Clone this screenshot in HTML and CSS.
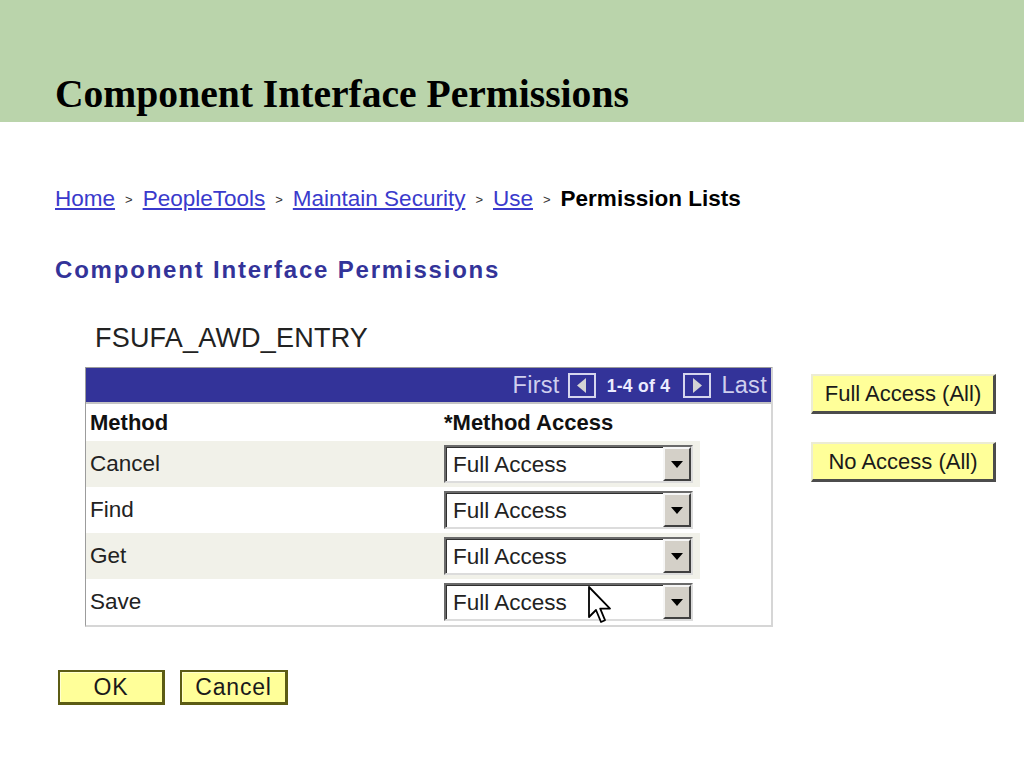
FILE: index.html
```html
<!DOCTYPE html>
<html lang="en">
<head>
    <meta charset="UTF-8">
    <meta name="viewport" content="width=device-width, initial-scale=1.0">
    <title>Component Interface Permissions</title>
    <link rel="stylesheet" href="styles.css">
</head>
<body>
    <header class="slide-header">
        <h1 class="slide-title">Component Interface Permissions</h1>
    </header>

    <main class="page">
        <nav class="crumbs">
            <a href="#">Home</a><span class="crumb-sep">&gt;</span><a href="#">PeopleTools</a><span class="crumb-sep">&gt;</span><a href="#">Maintain Security</a><span class="crumb-sep">&gt;</span><a href="#">Use</a><span class="crumb-sep">&gt;</span><span class="crumb-current">Permission Lists</span>
        </nav>

        <h2 class="page-title">Component Interface Permissions</h2>

        <div class="ci-name">FSUFA_AWD_ENTRY</div>

        <div class="ci-body">
            <div class="grid">
                <div class="grid-bar">
                    <span class="pager-link">First</span>
                    <svg class="pager-btn pager-prev" width="28" height="25" viewBox="0 0 28 25">
                        <rect x="1" y="1" width="26" height="23" fill="#333399" stroke="#d6d6ee" stroke-width="2"/>
                        <polygon points="9,12.5 18,5 18,20" fill="#d4d4d4"/>
                    </svg>
                    <span class="pager-count">1-4 of 4</span>
                    <svg class="pager-btn pager-next" width="28" height="25" viewBox="0 0 28 25">
                        <rect x="1" y="1" width="26" height="23" fill="#333399" stroke="#d6d6ee" stroke-width="2"/>
                        <polygon points="19,12.5 10,5 10,20" fill="#d4d4d4"/>
                    </svg>
                    <span class="pager-link">Last</span>
                </div>

                <table class="grid-table">
                    <thead>
                        <tr>
                            <th class="col-method">Method</th>
                            <th class="col-access">*Method Access</th>
                        </tr>
                    </thead>
                    <tbody>
                        <tr class="row-alt">
                            <td>Cancel</td>
                            <td><div class="dropdown"><span class="dropdown-value">Full Access</span><span class="dropdown-btn"></span></div></td>
                        </tr>
                        <tr>
                            <td>Find</td>
                            <td><div class="dropdown"><span class="dropdown-value">Full Access</span><span class="dropdown-btn"></span></div></td>
                        </tr>
                        <tr class="row-alt">
                            <td>Get</td>
                            <td><div class="dropdown"><span class="dropdown-value">Full Access</span><span class="dropdown-btn"></span></div></td>
                        </tr>
                        <tr>
                            <td>Save</td>
                            <td>
                                <div class="dropdown">
                                    <span class="dropdown-value">Full Access</span><span class="dropdown-btn"></span>
                                    <!-- mouse pointer captured in the screenshot -->
                                    <svg class="mouse-cursor" width="26" height="40" viewBox="0 0 13 20">
                                        <path d="M1 1 L1 16 L4.5 12.5 L7 18.5 L9 17.6 L6.6 11.8 L11.5 11.8 Z" fill="#fff" stroke="#000" stroke-width="0.9" stroke-linejoin="round"/>
                                    </svg>
                                </div>
                            </td>
                        </tr>
                    </tbody>
                </table>
            </div>

            <div class="bulk-actions">
                <button class="raised-btn">Full Access (All)</button>
                <button class="raised-btn">No Access (All)</button>
            </div>
        </div>

        <div class="form-actions">
            <button class="ps-btn ps-btn-ok">OK</button>
            <button class="ps-btn">Cancel</button>
        </div>
    </main>
</body>
</html>
```

FILE: styles.css
```css
:root {
    --band-green: #bad4ab;
    --ps-navy: #333399;
    --ps-link: #3a3acc;
    --ps-yellow: #ffff99;
    --row-alt: #f1f1e9;
    --text-color: #1e1e1e;
}

body {
    margin: 0;
    background: #ffffff;
    color: var(--text-color);
    font-family: 'Liberation Sans', Arial, sans-serif;
}

.slide-header {
    height: 122px;
    box-sizing: border-box;
    padding: 72px 0 0 55px;
    background: var(--band-green);
}

.slide-title {
    margin: 0;
    font-family: 'Liberation Serif', 'Times New Roman', serif;
    font-size: 39.6px;
    line-height: 45px;
    font-weight: bold;
    color: #000;
}

.page {
    padding: 0 0 0 55px;
}

.crumbs {
    margin-top: 63px;
    font-size: 22.5px;
    line-height: 28px;
    white-space: nowrap;
}

.crumbs a {
    color: var(--ps-link);
    text-decoration: underline;
}

.crumb-sep {
    display: inline-block;
    margin: 0 10px;
    font-size: 13px;
    vertical-align: 2px;
    color: #333;
}

.crumb-current {
    font-weight: bold;
    color: #000;
}

.page-title {
    margin: 41px 0 0;
    font-size: 24px;
    line-height: 30px;
    letter-spacing: 1.8px;
    font-weight: bold;
    color: var(--ps-navy);
}

.ci-name {
    margin: 37px 0 0 40px;
    font-size: 27px;
    line-height: 32px;
    letter-spacing: 0.2px;
    color: #222;
}

.ci-body {
    display: flex;
    align-items: flex-start;
    margin: 13px 0 0 30px;
}

.grid {
    width: 688px;
    box-sizing: border-box;
    border: 1px solid #9c9c9c;
    border-right: 2px solid #d6d6d6;
    border-bottom: 2px solid #d6d6d6;
    background: #fff;
}

.grid-bar {
    display: flex;
    align-items: center;
    justify-content: flex-end;
    height: 34px;
    padding-right: 4px;
    background: var(--ps-navy);
    border-bottom: 2px solid #c4c4c4;
    color: #cfcfee;
}

.pager-link {
    font-size: 23.5px;
    letter-spacing: 0.3px;
}

.pager-prev {
    margin: 0 11px 0 8px;
}

.pager-next {
    margin: 0 10px 0 13px;
}

.pager-count {
    margin-top: 2px;
    font-size: 17.5px;
    font-weight: bold;
    letter-spacing: 0.3px;
    color: #ececff;
}

.pager-btn {
    display: block;
}

.grid-table {
    width: 614px;
    border-collapse: collapse;
}

.grid-table th {
    height: 37px;
    padding: 0 0 0 4px;
    text-align: left;
    font-size: 22px;
    font-weight: bold;
    color: #111;
}

.grid-table .col-method {
    width: 354px;
}

.grid-table .col-access {
    padding-left: 0;
}

.grid-table td {
    height: 46px;
    padding: 0 0 0 4px;
    font-size: 22.5px;
    color: #222;
}

.grid-table td + td {
    padding-left: 0;
}

.row-alt {
    background: var(--row-alt);
}

.dropdown {
    position: relative;
    display: flex;
    width: 249px;
    height: 38px;
    box-sizing: border-box;
    border: 2px solid;
    border-color: #6a6a6a #dcdcdc #dcdcdc #6a6a6a;
    box-shadow: inset 1px 1px 0 #303030;
    background: #fff;
}

.dropdown-value {
    flex: 1;
    padding: 5px 0 0 7px;
    font-size: 22.5px;
    line-height: 26px;
}

.dropdown-btn {
    position: relative;
    width: 28px;
    box-sizing: border-box;
    border: 2px solid;
    border-color: #f6f6f6 #404040 #404040 #f6f6f6;
    background: #d4d0c8;
}

.dropdown-btn::after {
    content: "";
    position: absolute;
    left: 6px;
    top: 12px;
    border-left: 6px solid transparent;
    border-right: 6px solid transparent;
    border-top: 7px solid #000;
}

.mouse-cursor {
    position: absolute;
    left: 141px;
    top: 0;
}

.bulk-actions {
    display: flex;
    flex-direction: column;
    gap: 28px;
    margin: 7px 0 0 38px;
}

.raised-btn {
    width: 185px;
    height: 40px;
    padding: 0;
    border: 2px solid;
    border-width: 2px 3px 3px 2px;
    border-color: #ececd4 #4c4c4c #4c4c4c #ececd4;
    background: var(--ps-yellow);
    font-family: 'Liberation Sans', Arial, sans-serif;
    font-size: 22px;
    color: #1a1a1a;
}

.form-actions {
    display: flex;
    gap: 15px;
    margin: 43px 0 0 3px;
}

.ps-btn {
    width: 108px;
    height: 35px;
    padding: 0;
    border: 2px solid #5c5c14;
    border-width: 2px 3px 3px 2px;
    box-shadow: inset 1px 1px 0 #ffffd0;
    background: var(--ps-yellow);
    font-family: 'Liberation Sans', Arial, sans-serif;
    font-size: 23px;
    letter-spacing: 0.8px;
    color: #1a1a1a;
}

.ps-btn-ok {
    width: 107px;
}
```
